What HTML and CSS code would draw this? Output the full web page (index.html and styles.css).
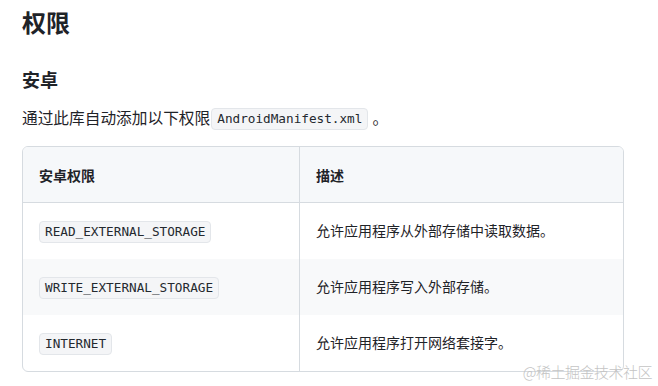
FILE: index.html
```html
<!DOCTYPE html>
<html lang="zh">
<head>
<meta charset="utf-8">
<link rel="stylesheet" href="styles.css">
</head>
<body>
<main class="doc">
  <h1 class="h1">权限</h1>
  <h2 class="h2">安卓</h2>
  <p class="para">通过此库自动添加以下权限<code class="code">AndroidManifest.xml</code>。</p>
  <div class="table-wrap">
    <table class="table">
      <thead>
        <tr><th class="col1">安卓权限</th><th>描述</th></tr>
      </thead>
      <tbody>
        <tr><td class="col1"><code class="code">READ_EXTERNAL_STORAGE</code></td><td>允许应用程序从外部存储中读取数据。</td></tr>
        <tr class="alt"><td class="col1"><code class="code">WRITE_EXTERNAL_STORAGE</code></td><td>允许应用程序写入外部存储。</td></tr>
        <tr><td class="col1"><code class="code">INTERNET</code></td><td>允许应用程序打开网络套接字。</td></tr>
      </tbody>
    </table>
  </div>
</main>
<div class="watermark">@稀土掘金技术社区</div>
</body>
</html>
```

FILE: styles.css
```css
html, body {
  margin: 0;
  padding: 0;
  background: #ffffff;
}
body {
  width: 658px;
  height: 386px;
  overflow: hidden;
  position: relative;
  font-family: "Noto Sans", "Noto Sans CJK SC", sans-serif;
  color: #1f2328;
}
.doc {
  padding: 6px 0 0 22px;
  width: 602px;
}
.h1 {
  margin: 0;
  font-size: 24px;
  line-height: 34px;
  font-weight: 700;
}
.h2 {
  margin: 26px 0 0;
  font-size: 18px;
  line-height: 28px;
  font-weight: 700;
}
.para {
  margin: 11px 0 0;
  font-size: 15.7px;
  line-height: 26px;
}
.code {
  font-family: "DejaVu Sans Mono", monospace;
  font-size: 12.7px;
  line-height: 20px;
  display: inline-block;
  padding: 0 5px;
  background: #f4f5f7;
  border: 1px solid #e3e6ea;
  border-radius: 4px;
  color: #24292f;
  vertical-align: middle;
}
.para .code {
  margin: 0 4px 0 1px;
  position: relative;
  top: -1px;
}
.table-wrap {
  margin-top: 15px;
  border: 1px solid #d6dbe0;
  border-radius: 6px;
  overflow: hidden;
}
.table {
  width: 100%;
  border-collapse: collapse;
  font-size: 14px;
}
.table th,
.table td {
  text-align: left;
  padding: 0 16px;
  height: 56px;
  vertical-align: middle;
}
.table th {
  font-weight: 700;
  background: #f6f8fa;
  border-bottom: 1px solid #d6dbe0;
  height: 55px;
}
.table .col1 {
  width: 244px;
  border-right: 1px solid #d6dbe0;
}
.table td {
  line-height: 22px;
}
.table tr.alt td {
  background: #f8f9fa;
}
.watermark {
  position: absolute;
  right: 6px;
  bottom: 4px;
  font-family: "Noto Sans CJK SC", sans-serif;
  font-weight: 300;
  font-size: 15px;
  color: #c4c4c4;
  letter-spacing: -0.5px;
}
```
